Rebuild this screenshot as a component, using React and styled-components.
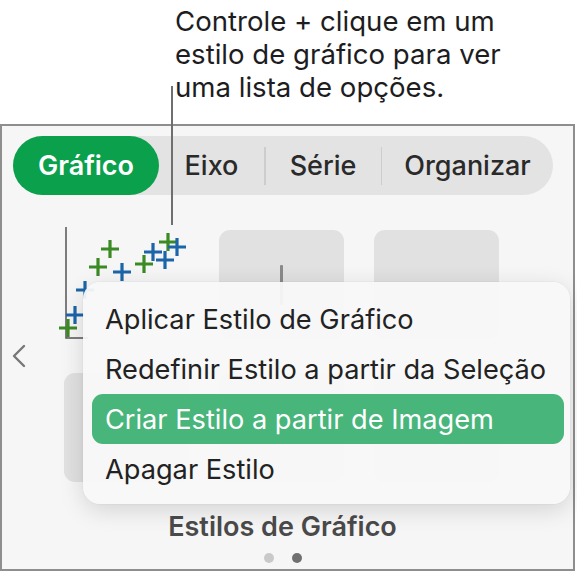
import React from 'react'
import styled, { createGlobalStyle } from 'styled-components'

const GlobalStyle = createGlobalStyle`
  body {
    margin: 0;
    background: #fff;
    font-family: Inter, "Noto Sans", "Liberation Sans", sans-serif;
    -webkit-font-smoothing: antialiased;
  }
`

const Page = styled.div`
  position: relative;
  width: 577px;
  height: 572px;
`

const Callout = styled.div`
  box-sizing: border-box;
  height: 124px;
  padding: 5px 0 0 175px;
  font-size: 27.6px;
  line-height: 33px;
  color: #1d1d1f;
`

const CalloutLine = styled.div`
  position: absolute;
  left: 171px;
  top: 86px;
  width: 1.5px;
  height: 139px;
  background: #6f6f6f;
  z-index: 5;
`

const Panel = styled.div`
  position: relative;
  box-sizing: border-box;
  width: 575px;
  height: 447px;
  border: 2px solid #8e8e8e;
  background: #f6f6f6;
  display: flex;
  flex-direction: column;
  align-items: flex-start;
`

const Track = styled.div`
  display: flex;
  align-items: center;
  margin: 10px 0 0 11px;
  width: 540px;
  height: 59px;
  border-radius: 30px;
  background: #e3e3e3;
`

const Segment = styled.div`
  display: flex;
  align-items: center;
  justify-content: center;
  width: ${p => p.$w}px;
  height: 100%;
  border-radius: 30px;
  font-size: 27px;
  font-weight: ${p => (p.$active ? 600 : 500)};
  color: ${p => (p.$active ? '#fff' : '#2a2a2a')};
  background: ${p => (p.$active ? '#0aa04c' : 'transparent')};
`

const Divider = styled.div`
  width: 1.5px;
  height: 38px;
  background: #cdcdcd;
`

const Body = styled.div`
  display: flex;
  align-items: center;
  margin-top: 35px;
`

const Chevron = styled.div`
  width: 62px;
  display: flex;
  padding-left: 10px;
  box-sizing: border-box;
`

const Grid = styled.div`
  display: grid;
  grid-template-columns: repeat(3, 125px);
  grid-auto-rows: 109px;
  column-gap: 30px;
  row-gap: 34px;
`

const Thumb = styled.div`
  position: relative;
  border-radius: 11px;
  background: ${p => (p.$plain ? 'transparent' : '#e1e1e1')};
`

const Bar = styled.div`
  position: absolute;
  left: 61px;
  top: 35px;
  width: 3px;
  height: 40px;
  border-radius: 1px;
  background: #8a8a8a;
`

const Title = styled.div`
  align-self: stretch;
  margin: 31px 0 0 0;
  padding-right: 10px;
  text-align: center;
  font-size: 27px;
  line-height: 28px;
  font-weight: 600;
  color: #4a4a4a;
`

const Dots = styled.div`
  align-self: stretch;
  display: flex;
  justify-content: center;
  gap: 18px;
  margin-top: 12px;
  padding-right: 10px;
`

const Dot = styled.span`
  width: 10px;
  height: 10px;
  border-radius: 50%;
  background: ${p => (p.$on ? '#707070' : '#c9c9c9')};
`

const Menu = styled.div`
  position: absolute;
  left: 81px;
  top: 156px;
  width: 487px;
  height: 222px;
  box-sizing: border-box;
  padding: 12px 6px 10px 9px;
  border-radius: 17px;
  background: rgba(248, 248, 248, 0.95);
  box-shadow: 0 6px 24px rgba(0, 0, 0, 0.14), 0 0 0 0.5px rgba(0, 0, 0, 0.05);
  z-index: 3;
`

const Item = styled.div`
  height: 50px;
  display: flex;
  align-items: center;
  padding-left: 13px;
  border-radius: 11px;
  font-size: 27.2px;
  color: ${p => (p.$hi ? '#fff' : '#222')};
  background: ${p => (p.$hi ? '#48b57b' : 'transparent')};
`

const green = '#3b8a24'
const blue = '#1b65a9'

const points = [
  [46, 19, green], [34, 37, green], [80, 34, green], [104, 12, green], [4, 98, green],
  [58, 42, blue], [89, 22, blue], [101, 30, blue], [113, 17, blue], [21, 60, blue], [11, 85, blue],
]

const Scatter = () => (
  <svg width="125" height="109" style={{ overflow: 'visible' }}>
    <path d="M2 -3V108H24" fill="none" stroke="#555" strokeWidth="1.5" />
    {points.map(([x, y, c], i) => (
      <path key={i} d={`M${x - 9} ${y}H${x + 9}M${x} ${y - 9}V${y + 9}`} stroke={c} strokeWidth="3.2" />
    ))}
  </svg>
)

const menuItems = [
  'Aplicar Estilo de Gráfico',
  'Redefinir Estilo a partir da Seleção',
  'Criar Estilo a partir de Imagem',
  'Apagar Estilo',
]

export default function App() {
  return (
    <Page>
      <GlobalStyle />
      <Callout>
        Controle + clique em um<br />
        estilo de gráfico para ver<br />
        uma lista de opções.
      </Callout>
      <CalloutLine />
      <Panel>
        <Track>
          <Segment $w={146} $active>Gráfico</Segment>
          <Segment $w={105}>Eixo</Segment>
          <Divider />
          <Segment $w={115}>Série</Segment>
          <Divider />
          <Segment $w={171}>Organizar</Segment>
        </Track>
        <Body>
          <Chevron>
            <svg width="14" height="24" viewBox="0 0 14 24">
              <path d="M12 2L2 12L12 22" fill="none" stroke="#777" strokeWidth="2.4" strokeLinecap="round" strokeLinejoin="round" />
            </svg>
          </Chevron>
          <Grid>
            <Thumb $plain><Scatter /></Thumb>
            <Thumb><Bar /></Thumb>
            <Thumb />
            <Thumb />
            <Thumb />
            <Thumb />
          </Grid>
        </Body>
        <Title>Estilos de Gráfico</Title>
        <Dots>
          <Dot />
          <Dot $on />
        </Dots>
        <Menu>
          {menuItems.map((t, i) => (
            <Item key={t} $hi={i === 2}>{t}</Item>
          ))}
        </Menu>
      </Panel>
    </Page>
  )
}
